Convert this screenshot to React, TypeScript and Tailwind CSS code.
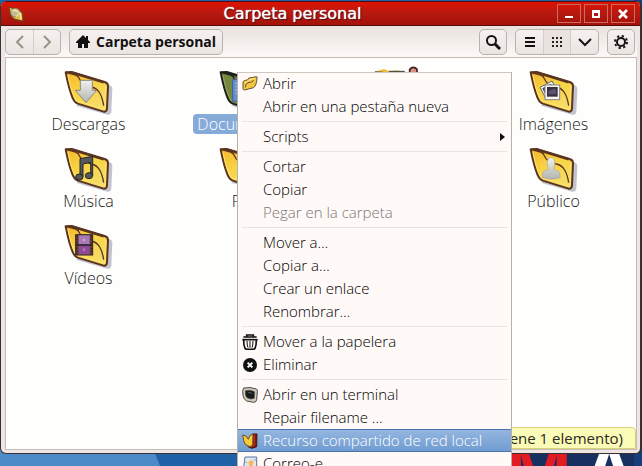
import type { ReactNode } from "react";

type Emblem = "download" | "music" | "video" | "images" | "person" | "document" | "desktop" | "none";

const EMBLEMS: Record<Emblem, ReactNode> = {
  none: null,
  download: (
    <path d="M49 37h36v30h13L66 104 34 67h15z" fill="url(#silver)" stroke="#8a8a80" strokeWidth="3" strokeLinejoin="round" />
  ),
  music: (
    <g fill="#55585a" stroke="#252525" strokeWidth="3">
      <path d="M48 41l38-7v58h-6V52l-23 5v38h-9z" />
      <ellipse cx="46" cy="96" rx="11" ry="9" />
      <ellipse cx="75" cy="92" rx="11" ry="9" />
    </g>
  ),
  video: (
    <g>
      <rect x="35" y="38" width="51" height="61" fill="#6d4038" stroke="#2b2328" strokeWidth="3" />
      <path d="M39 41v56M82 41v56" stroke="#332b30" strokeWidth="5" strokeDasharray="5 4" />
      <rect x="44" y="40" width="33" height="27" fill="#a779b5" />
      <rect x="44" y="71" width="33" height="26" fill="#8d4b96" />
      <circle cx="60" cy="54" r="4" fill="#c9a6d3" />
      <circle cx="60" cy="83" r="4" fill="#b57bc0" />
      <path d="M36 69h50" stroke="#2b2330" strokeWidth="4" />
    </g>
  ),
  images: (
    <g>
      <path d="M33 58l36-19 17 32-36 20z" fill="#f2f2ee" stroke="#666" strokeWidth="3" />
      <path d="M40 61l26-14 10 20-26 14z" fill="#44424e" />
      <rect x="48" y="51" width="44" height="44" fill="#f5f5f2" stroke="#888" strokeWidth="3" />
      <rect x="54" y="57" width="32" height="29" fill="#38303f" />
      <path d="M58 70l18-9 6 6v12H58z" fill="#5a5070" />
    </g>
  ),
  person: (
    <path
      d="M55 59c-4-28 26-28 22 0 0 7-3 10-4 14 12 3 19 5 20 15v10q-26 9-53 0V88c1-10 9-12 19-15-1-4-4-7-4-14z"
      fill="url(#silver)"
      stroke="#aaa9a0"
      strokeWidth="2"
    />
  ),
  document: (
    <g>
      <path d="M41 34h58v66H41z" fill="#668fd0" stroke="#3d609f" strokeWidth="3" />
      <path d="M49 46h40M49 56h40M49 66h40M49 76h40" stroke="#98b7e5" strokeWidth="4" />
    </g>
  ),
  desktop: (
    <g>
      <path d="M6 10l24-7 15 6 28-2 18 9z" fill="#edc13e" />
      <path d="M46 10h45v30H46z" fill="#a8b8cf" stroke="#3d3b3b" strokeWidth="3" />
      <path d="M107 12V4q12-12 22 0v9" fill="#db8f86" stroke="#3e211d" strokeWidth="5" />
    </g>
  ),
};

function Folder({ emblem, selected = false }: { emblem: Emblem; selected?: boolean }) {
  const line = selected ? "#1c2119" : "#5a3420";
  return (
    <svg viewBox="3 0 144 144" className="size-12 overflow-visible" aria-hidden="true">
      <path d="M36 113l94 27q11 1 12-9l3-68q0-9-9-12z" fill="#c4c4cf" />
      <path
        d="M5 13l18-1 99 30q10 3 10 12l-3 67q-1 11-10 10L41 107q-10-4-15-17Q15 64 5 13z"
        fill={selected ? "#76883f" : "url(#folderFill)"}
        stroke={line}
        strokeWidth="6"
        strokeLinejoin="round"
      />
      <path d="M12 22q10 53 24 75l86 27 3-68" fill="none" stroke={selected ? "#98a465" : "#ffe66c"} strokeWidth="3" />
      <path d="M5 13l30 8q9 3 12 13l5 8q4 6 14 9l16 6q16 3 25 18 8 13 12 38" fill="none" stroke={line} strokeWidth="4" />
      <path d="M24 14l95 29" fill="none" stroke={line} strokeWidth="7" />
      {EMBLEMS[emblem]}
    </svg>
  );
}

const FILES: { label: string; emblem: Emblem; selected?: boolean; hidden?: boolean }[] = [
  { label: "Descargas", emblem: "download" },
  { label: "Documentos", emblem: "document", selected: true },
  { label: "", emblem: "desktop" },
  { label: "Imágenes", emblem: "images" },
  { label: "Música", emblem: "music" },
  { label: "Pdf", emblem: "none" },
  { label: "", emblem: "none", hidden: true },
  { label: "Público", emblem: "person" },
  { label: "Vídeos", emblem: "video" },
];

const OpenIcon = (
  <svg viewBox="0 0 48 48" className="size-4">
    <path d="M3 17q5-5 13-5l5-6 23-4q2 0 1 4-1 21-10 29L7 42q-4 0-4-5z" fill="#f3c743" stroke="#665130" strokeWidth="3" />
    <path d="M10 34q0-12 8-14l8-1q6-1 9-7" fill="none" stroke="#665130" strokeWidth="3" />
    <path d="M8 20l10-4 5-5 16-4" fill="none" stroke="#ffe98b" strokeWidth="3" />
  </svg>
);
const TrashIcon = (
  <svg viewBox="0 0 48 48" className="size-4" fill="none" stroke="#111" strokeWidth="5">
    <path d="M14 8V3h20v5M4 9h40" />
    <path d="M1 17h46" strokeWidth="5" />
    <path d="M5 18q0 17 4 25 2 3 6 3h18q4 0 6-3 4-8 4-25" />
    <path d="M15 21q0 14 3 20M24 21v20M33 21q0 14-3 20" strokeWidth="3" />
  </svg>
);
const DeleteIcon = (
  <svg viewBox="0 0 48 48" className="size-4">
    <circle cx="24" cy="24" r="21" fill="#111" />
    <path d="M17 17l14 14M31 17L17 31" stroke="#fff" strokeWidth="6" />
  </svg>
);
const TerminalIcon = (
  <svg viewBox="0 0 48 48" className="size-4">
    <path d="M5 3q19-4 38 3 4 2 3 8l-2 24q-1 8-9 8l-21-4Q5 38 3 25 0 8 5 3z" fill="#d3cabc" stroke="#4b4843" strokeWidth="3" />
    <path d="M10 11q15-4 28 3l-1 20q-9 5-21-1Q8 27 10 11z" fill="#161b1b" stroke="#615b51" strokeWidth="2" />
    <path d="M15 14q11 0 18 5-8 3-18-5z" fill="#59605f" />
  </svg>
);
const ShareIcon = (
  <svg viewBox="0 0 48 48" className="size-4">
    <path d="M31 3h14l-1 38-14 5-12-5z" fill="#7e1715" stroke="#461313" strokeWidth="3" />
    <path d="M2 6l10 3 7 10 5-12 9-3-1 33-9 4-14-8Q4 24 2 6z" fill="#f4cd3c" stroke="#785019" strokeWidth="3" />
    <path d="M37 5v31l-9 5" fill="none" stroke="#c23c22" strokeWidth="3" />
  </svg>
);
const MailIcon = (
  <svg viewBox="0 0 48 48" className="size-4">
    <path d="M9 3h35v39H4z" fill="#dce8f5" stroke="#5b7394" strokeWidth="3" />
    <path d="M5 13l17 13L43 8" fill="none" stroke="#8fa7c4" strokeWidth="3" />
    <path d="M27 10l13 13h-7v16H21V23h-7z" fill="#f7b35f" stroke="#fff0d5" strokeWidth="2" />
  </svg>
);

type Item = { label: string; icon?: ReactNode; state?: "disabled" | "active"; submenu?: boolean };

const MENU: Item[][] = [
  [{ label: "Abrir", icon: OpenIcon }, { label: "Abrir en una pestaña nueva" }],
  [{ label: "Scripts", submenu: true }],
  [{ label: "Cortar" }, { label: "Copiar" }, { label: "Pegar en la carpeta", state: "disabled" }],
  [{ label: "Mover a…" }, { label: "Copiar a…" }, { label: "Crear un enlace" }, { label: "Renombrar…" }],
  [{ label: "Mover a la papelera", icon: TrashIcon }, { label: "Eliminar", icon: DeleteIcon }],
  [
    { label: "Abrir en un terminal", icon: TerminalIcon },
    { label: "Repair filename ..." },
    { label: "Recurso compartido de red local", icon: ShareIcon, state: "active" },
    { label: "Correo-e", icon: MailIcon },
  ],
];

function MenuRow({ item }: { item: Item }) {
  const tone =
    item.state === "active"
      ? "bg-linear-to-b from-[#96b7e0] to-[#6f9bd0] text-white shadow-[inset_0_1px_#4a72ab,inset_0_-1px_#4a72ab]"
      : item.state === "disabled"
        ? "text-[#797573]"
        : "text-black";
  return (
    <button
      type="button"
      role="menuitem"
      disabled={item.state === "disabled"}
      className={`flex h-[23px] w-full items-center gap-1 pr-1.5 pl-1 text-left whitespace-nowrap ${tone}`}
    >
      <span className="flex w-[17px] shrink-0">{item.icon}</span>
      <span className="flex-1">{item.label}</span>
      {item.submenu && (
        <svg viewBox="0 0 5 8" className="h-2 w-[5px]">
          <path d="M0 0l5 4-5 4z" fill="#111" />
        </svg>
      )}
    </button>
  );
}

function ContextMenu() {
  return (
    <div
      role="menu"
      className="absolute top-[72px] left-[237px] w-[275px] border-x border-[#b8b0a4] bg-[#fffaf8] font-['Open_Sans',sans-serif] text-[15px] font-light shadow-[inset_0_1px_#cfc8be]"
    >
      {MENU.map((group, i) => (
        <div key={i} role="group">
          {i > 0 && (
            <div className="flex h-[7px] items-center px-1">
              <hr className="w-full border-[#ebe5e2]" />
            </div>
          )}
          {group.map((item) => (
            <MenuRow key={item.label} item={item} />
          ))}
        </div>
      ))}
    </div>
  );
}

const toolFrame = "flex h-[26px] rounded-[5px] border border-[#b5b3b0] bg-linear-to-b from-[#f6f1ef] to-[#ebe4e1]";

function ToolButton({ label, children, className = "w-[27px]" }: { label: string; children: ReactNode; className?: string }) {
  return (
    <button type="button" aria-label={label} className={`flex items-center justify-center ${className}`}>
      {children}
    </button>
  );
}

function Chevron({ d, muted = false }: { d: string; muted?: boolean }) {
  return (
    <svg viewBox="0 0 14 14" className="size-3.5" fill="none" stroke={muted ? "#9b9286" : "#151515"} strokeWidth="2">
      <path d={d} />
    </svg>
  );
}

function Toolbar() {
  return (
    <div className="flex h-[31px] items-center gap-2 bg-linear-to-b from-[#e9e2df] to-[#fdf8f6] pr-0.5">
      <div className={toolFrame}>
        <ToolButton label="Atrás">
          <Chevron muted d="M10 1L4 7l6 6" />
        </ToolButton>
        <ToolButton label="Adelante" className="w-[27px] border-l border-[#d4cecb]">
          <Chevron muted d="M4 1l6 6-6 6" />
        </ToolButton>
      </div>
      <button
        type="button"
        className={`${toolFrame} items-center gap-1.5 px-1.5 font-['Open_Sans',sans-serif] text-sm font-bold whitespace-nowrap text-[#111]`}
      >
        <svg viewBox="0 0 14 13" className="h-[13px] w-3.5">
          <path d="M7 0l3 3V1h2v4l2 2v1h-2v5H8V9H6v4H2V8H0V7z" fill="#111" />
        </svg>
        Carpeta personal
      </button>
      <div className="ml-auto flex gap-2">
        <div className={toolFrame}>
          <ToolButton label="Buscar" className="w-[26px]">
            <svg viewBox="0 0 16 16" className="size-4" fill="none" stroke="#151515">
              <circle cx="6.5" cy="6.5" r="4.5" strokeWidth="2" />
              <path d="M10 10l5 5" strokeWidth="3" />
            </svg>
          </ToolButton>
        </div>
        <div className={toolFrame}>
          <ToolButton label="Vista de lista">
            <svg viewBox="0 0 10 10" className="size-2.5" fill="#111">
              <path d="M0 0h10v2H0zM0 4h10v2H0zM0 8h10v2H0z" />
            </svg>
          </ToolButton>
          <ToolButton label="Vista de iconos" className="w-7 border-x border-[#d4cecb] bg-[#e9e2df]">
            <svg viewBox="0 0 10 10" className="size-2.5" stroke="#222" strokeWidth="2" strokeDasharray="2 2">
              <path d="M0 1h10M0 5h10M0 9h10" />
            </svg>
          </ToolButton>
          <ToolButton label="Opciones de vista">
            <Chevron d="M1 4l6 6 6-6" />
          </ToolButton>
        </div>
        <div className={toolFrame}>
          <ToolButton label="Configuración" className="w-[26px]">
            <svg viewBox="0 0 16 16" className="size-4" fill="none" stroke="#151515">
              <circle cx="8" cy="8" r="4" strokeWidth="2" />
              <circle cx="8" cy="8" r="6" strokeWidth="2" strokeDasharray="2.2 2.512" />
            </svg>
          </ToolButton>
        </div>
      </div>
    </div>
  );
}

function TitleBar() {
  const frame = "flex h-[19px] w-6 items-center justify-center border border-[#c96c62] text-white";
  return (
    <header className="flex h-[25px] items-center border-y border-[#540e0b] bg-linear-to-b from-[#df1200] via-[#b51910] to-[#a51108] pr-[5px] pl-[7px]">
      <svg viewBox="0 0 48 48" className="size-4">
        <path d="M3 3l16 6 24 12 2 24-24-5Q7 34 3 3z" fill="#e4bd43" stroke="#65471d" strokeWidth="3" />
        <ellipse cx="22" cy="20" rx="14" ry="13" fill="#c1bd91" stroke="#77724f" strokeWidth="2" />
        <path d="M12 15q8-6 19 4M25 32l11-11 3 19" fill="none" stroke="#f5e5a6" strokeWidth="4" />
      </svg>
      <h1 className="flex-1 pl-1 text-center font-['DejaVu_Sans',sans-serif] text-base leading-5 text-white [text-shadow:0_0_1px_#fff,1px_1px_1px_#2b0402]">
        Carpeta personal
      </h1>
      <div className="flex gap-[3px]">
        <button type="button" aria-label="Minimizar" className={frame}>
          <svg viewBox="0 0 10 10" className="size-2.5"><path d="M1 7h8v2H1z" fill="#fff" /></svg>
        </button>
        <button type="button" aria-label="Maximizar" className={frame}>
          <svg viewBox="0 0 10 10" className="size-2.5"><path d="M1 1h8v8H1zM3 4v3h4V4z" fill="#fff" fillRule="evenodd" /></svg>
        </button>
        <button type="button" aria-label="Cerrar" className={frame}>
          <svg viewBox="0 0 10 10" className="size-2.5"><path d="M1 1l8 8M9 1L1 9" stroke="#fff" strokeWidth="2.5" /></svg>
        </button>
      </div>
    </header>
  );
}

function Wallpaper() {
  return (
    <div className="absolute inset-0 overflow-hidden bg-[#1f62a8]" aria-hidden="true">
      <svg className="absolute bottom-0 left-0 h-5 w-full" viewBox="0 0 642 20" preserveAspectRatio="none">
        <path d="M0 0h152l8 20H0z" fill="#4c8bc8" />
        <path d="M480 0h162v20H480z" fill="#16305f" />
      </svg>
      <div className="absolute top-0 right-0 h-full w-2 bg-[#173e78]" />
      <div className="absolute top-[433px] right-0 flex gap-2 pr-1 font-['Liberation_Sans',sans-serif] text-[80px] leading-[80px] font-bold">
        <span className="text-[#e31b23]">M</span>
        <span className="text-white">A</span>
      </div>
    </div>
  );
}

export default function App() {
  return (
    <div className="relative h-screen overflow-hidden pt-px pb-3">
      <Wallpaper />
      <svg className="absolute size-0" aria-hidden="true">
        <defs>
          <linearGradient id="folderFill" x1="0" y1="0" x2="0.6" y2="1">
            <stop offset="0" stopColor="#f5b52c" />
            <stop offset="0.5" stopColor="#f8d444" />
            <stop offset="1" stopColor="#f6dc68" />
          </linearGradient>
          <linearGradient id="silver" x1="0" y1="0" x2="0" y2="1">
            <stop offset="0" stopColor="#f1f1ee" />
            <stop offset="1" stopColor="#b4b4ae" />
          </linearGradient>
        </defs>
      </svg>
      <div className="relative flex h-full flex-col overflow-hidden rounded-[6px] border-r-2 border-b border-l border-[#363232] bg-[#ede6e4]">
        <TitleBar />
        <main className="flex min-h-0 flex-1 flex-col pr-[3px] pb-[3px] pl-1">
          <Toolbar />
          <div className="relative min-h-0 flex-1 border border-[#c5bbb5] bg-[#fefefd]">
            <ul className="grid grid-cols-4 px-[5px] pt-[10px]">
              {FILES.map((file, i) => (
                <li key={i} className="flex h-[77px] flex-col items-center">
                  {!file.hidden && <Folder emblem={file.emblem} selected={file.selected} />}
                  {file.label && (
                    <span
                      className={`-mt-0.5 rounded-[4px] px-1 font-['Open_Sans',sans-serif] text-base leading-5 font-light ${
                        file.selected ? "bg-[#86abd9] text-white" : "text-[#222]"
                      }`}
                    >
                      {file.label}
                    </span>
                  )}
                </li>
              ))}
            </ul>
            <div className="absolute right-0 bottom-0 h-[22px] rounded-tr-[4px] border border-[#d8d27a] bg-[#fbfbb8] px-3 font-['Open_Sans',sans-serif] text-[15px] leading-5 text-[#2a2a22]">
              (contiene 1 elemento)
            </div>
          </div>
        </main>
      </div>
      <ContextMenu />
    </div>
  );
}
